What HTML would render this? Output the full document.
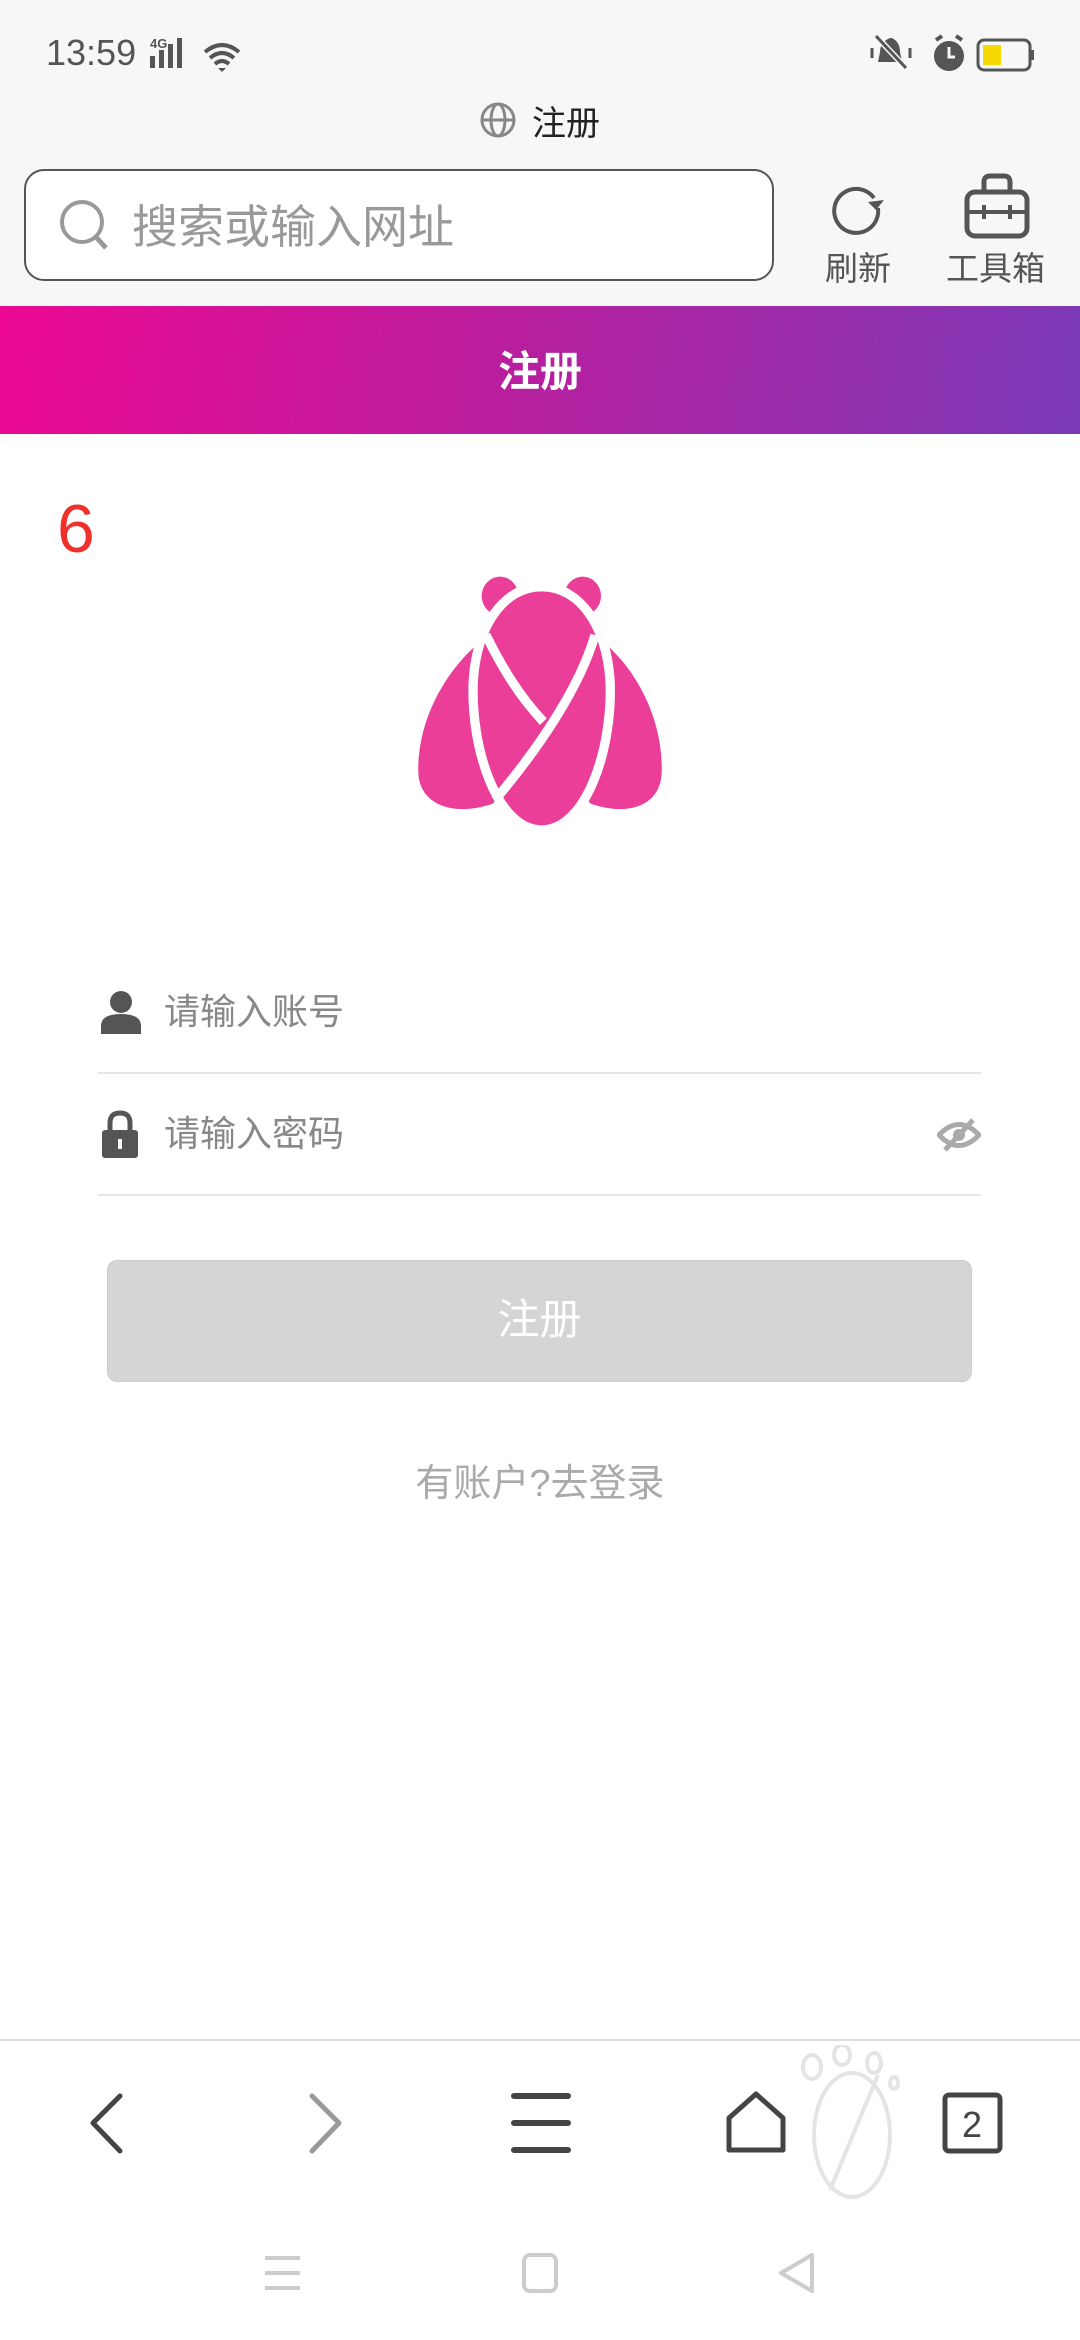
<!DOCTYPE html>
<html><head><meta charset="utf-8"><style>
*{margin:0;padding:0;box-sizing:border-box}
body{width:1080px;height:2340px;background:#fff;position:relative;overflow:hidden;font-family:"Liberation Sans","Noto Sans CJK SC",sans-serif}
.a{position:absolute}
</style></head><body>
<div class="a" style="left:0;top:0;width:1080px;height:306px;background:#f7f7f7"></div>
<div class="a" style="left:46px;top:32px;font-size:36px;color:#555;">13:59</div>
<div class="a" style="left:150px;top:36px;font-size:13px;color:#555;font-weight:bold">4G</div>
<svg class="a" style="left:150px;top:38px" width="100" height="34"><rect x="0" y="18" width="5" height="12" fill="#555"/><rect x="9" y="12" width="5" height="18" fill="#555"/><rect x="18" y="6" width="5" height="24" fill="#555"/><rect x="27" y="0" width="5" height="30" fill="#555"/>
<path d="M55 14 Q72 0 89 14 M60 20 Q72 10 84 20 M65 26 Q72 20 79 26" stroke="#555" stroke-width="4" fill="none"/><path d="M68 30 l4 4 4-4z" fill="#555"/></svg>
<svg class="a" style="left:870px;top:32px" width="170" height="44"><path d="M20 6 Q10 10 10 20 L8 30 H32 L30 20 Q30 10 22 6Z" fill="#555"/><path d="M6 4 L36 36" stroke="#f7f7f7" stroke-width="6"/><path d="M6 4 L36 36" stroke="#555" stroke-width="3"/><path d="M2 16v10 M40 16v10" stroke="#555" stroke-width="3"/>
<circle cx="79" cy="24" r="15" fill="#555"/><path d="M66 8 l6 -4 M92 8 l-6 -4" stroke="#555" stroke-width="4"/><path d="M79 15 v10 h6" stroke="#f7f7f7" stroke-width="3" fill="none"/>
<rect x="108" y="8" width="52" height="30" rx="6" fill="none" stroke="#555" stroke-width="3"/><rect x="113" y="13" width="18" height="20" fill="#f5d800"/><rect x="161" y="18" width="3" height="10" fill="#555"/></svg>
<svg class="a" style="left:480px;top:102px" width="36" height="36"><circle cx="18" cy="18" r="16" fill="none" stroke="#888" stroke-width="3"/><ellipse cx="18" cy="18" rx="7" ry="16" fill="none" stroke="#888" stroke-width="3"/><path d="M2 18h32" stroke="#888" stroke-width="3"/></svg>
<div class="a" style="left:532px;top:96px;font-size:34px;color:#222">注册</div>
<div class="a" style="left:24px;top:169px;width:750px;height:112px;border:2px solid #555;border-radius:20px;background:#fff"></div>
<svg class="a" style="left:56px;top:196px" width="56" height="60"><circle cx="26" cy="26" r="20" fill="none" stroke="#999" stroke-width="4"/><path d="M40 41 L50 52" stroke="#999" stroke-width="5"/></svg>
<div class="a" style="left:132px;top:191px;font-size:46px;color:#999">搜索或输入网址</div>
<svg class="a" style="left:828px;top:176px" width="60" height="60"><path d="M46 22 A22 22 0 1 0 50 32" fill="none" stroke="#555" stroke-width="4"/><path d="M40 26 l8 8 8-10z" fill="#555"/></svg>
<div class="a" style="left:825px;top:242px;font-size:33px;color:#555">刷新</div>
<svg class="a" style="left:962px;top:172px" width="70" height="70"><rect x="5" y="20" width="60" height="44" rx="8" fill="none" stroke="#555" stroke-width="5"/><path d="M22 20 V10 Q22 4 28 4 H42 Q48 4 48 10 V20" fill="none" stroke="#555" stroke-width="5"/><path d="M5 40 H65 M22 33 v14 M48 33 v14" stroke="#555" stroke-width="4"/></svg>
<div class="a" style="left:946px;top:242px;font-size:33px;color:#555">工具箱</div>
<div class="a" style="left:0;top:306px;width:1080px;height:128px;background:linear-gradient(100deg,#ec0892 0%,#b5209f 50%,#7a3ab8 100%)"></div>
<div class="a" style="left:0;top:338px;width:1080px;text-align:center;font-size:42px;color:#fff;font-weight:bold">注册</div>
<div class="a" style="left:57px;top:490px;font-size:68px;color:#f0312b">6</div>
<svg class="a" style="left:380px;top:540px" width="320" height="320" viewBox="0 0 960 960">
<ellipse cx="360" cy="168" rx="55" ry="58" fill="#ea3e98"/><ellipse cx="608" cy="168" rx="55" ry="58" fill="#ea3e98"/>
<path d="M320 290 C200 380 110 540 115 700 C120 800 230 830 340 790 L480 520Z" fill="#ea3e98"/>
<path d="M650 290 C770 380 850 540 845 700 C840 800 740 830 630 790 L480 520Z" fill="#ea3e98"/>
<path d="M485 140 C600 140 680 260 690 420 C700 620 620 870 485 870 C350 870 270 620 280 420 C290 260 370 140 485 140Z" fill="#ea3e98" stroke="#fff" stroke-width="28"/>
<path d="M318 285 C370 390 420 470 490 545" fill="none" stroke="#fff" stroke-width="28"/>
<path d="M645 285 C600 440 480 620 345 780" fill="none" stroke="#fff" stroke-width="28"/>
</svg>
<svg class="a" style="left:100px;top:990px" width="42" height="44"><circle cx="21" cy="12" r="11" fill="#555"/><path d="M1 44 V36 Q1 24 21 24 Q41 24 41 36 V44Z" fill="#555"/></svg>
<div class="a" style="left:164px;top:983px;font-size:36px;color:#888">请输入账号</div>
<div class="a" style="left:98px;top:1072px;width:883px;height:2px;background:#e6e6e6"></div>
<svg class="a" style="left:100px;top:1110px" width="40" height="48"><path d="M10 20 V13 Q10 3 20 3 Q30 3 30 13 V20" fill="none" stroke="#555" stroke-width="5"/><rect x="2" y="20" width="36" height="28" rx="3" fill="#555"/><rect x="18" y="29" width="4" height="10" fill="#fff"/></svg>
<div class="a" style="left:164px;top:1105px;font-size:36px;color:#888">请输入密码</div>
<svg class="a" style="left:937px;top:1118px" width="44" height="34"><path d="M2 17 Q22 -4 42 17 Q22 38 2 17Z" fill="none" stroke="#aaa" stroke-width="5"/><circle cx="22" cy="17" r="6" fill="#aaa"/><path d="M8 32 L36 2" stroke="#aaa" stroke-width="5"/></svg>
<div class="a" style="left:98px;top:1194px;width:883px;height:2px;background:#e6e6e6"></div>
<div class="a" style="left:107px;top:1260px;width:865px;height:122px;background:#d5d5d5;border-radius:10px;border:1px solid #ccc;text-align:center;line-height:118px;font-size:42px;color:#fff">注册</div>
<div class="a" style="left:0;top:1452px;width:1080px;text-align:center;font-size:38px;color:#aaa">有账户?去登录</div>
<div class="a" style="left:0;top:2039px;width:1080px;height:2px;background:#ddd"></div>
<svg class="a" style="left:0;top:2045px" width="1080" height="295">
<g fill="none" stroke="#e4e4e4" stroke-width="4"><ellipse cx="812" cy="22" rx="9" ry="12"/><ellipse cx="842" cy="10" rx="8" ry="10"/><ellipse cx="874" cy="18" rx="7" ry="10"/><ellipse cx="894" cy="38" rx="4" ry="6"/><ellipse cx="852" cy="90" rx="38" ry="62"/><path d="M830 145 L878 30"/></g>
<path d="M120 51 L93 78 L120 106" fill="none" stroke="#444" stroke-width="5" stroke-linecap="round" stroke-linejoin="round"/>
<path d="M312 51 L339 78 L312 106" fill="none" stroke="#999" stroke-width="5" stroke-linecap="round" stroke-linejoin="round"/>
<path d="M514 51 H568 M514 78 H568 M514 105 H568" stroke="#444" stroke-width="6" stroke-linecap="round"/>
<path d="M756 49 L783 73 V105 H729 V73Z" fill="none" stroke="#444" stroke-width="5" stroke-linejoin="round"/>
<rect x="945" y="50" width="55" height="56" rx="4" fill="none" stroke="#444" stroke-width="5"/>
<text x="972" y="92" text-anchor="middle" font-size="36" fill="#444" font-family="Liberation Sans">2</text>
<path d="M265 213 H300 M265 228 H300 M265 243 H300" stroke="#ccc" stroke-width="4"/>
<rect x="524" y="210" width="32" height="36" rx="6" fill="none" stroke="#ccc" stroke-width="4"/>
<path d="M812 210 L781 228 L812 246Z" fill="none" stroke="#ccc" stroke-width="4" stroke-linejoin="round"/>
</svg>
</body></html>
